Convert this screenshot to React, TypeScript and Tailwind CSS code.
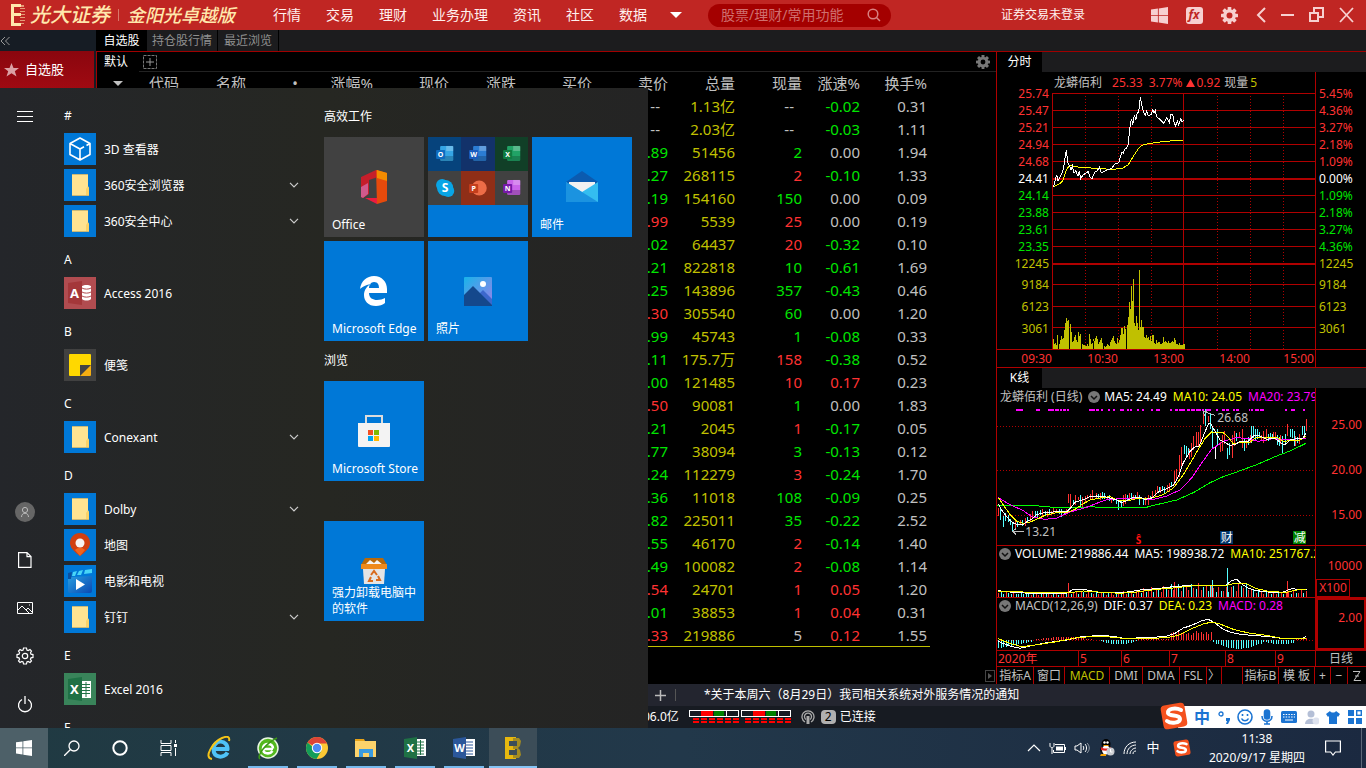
import type { ReactNode } from "react";

type Tone = "up" | "down" | "flat";

const TONES: Record<Tone, string> = {
  up: "text-[#ff3232]",
  down: "text-[#00e600]",
  flat: "text-[#c0c0c0]",
};

const NAV = ["行情", "交易", "理财", "业务办理", "资讯", "社区", "数据"];

const HEADERS = ["代码", "名称", "•", "涨幅%", "现价", "涨跌", "买价", "卖价", "总量", "现量", "涨速%", "换手%"];

// ask, ask tone, volume, last volume, last volume tone, speed, turnover
const QUOTES: [string, Tone, string, string, Tone, string, string][] = [
  ["--", "flat", "1.13亿", "--", "flat", "-0.02", "0.31"],
  ["--", "flat", "2.03亿", "--", "flat", "-0.03", "1.11"],
  [".89", "down", "51456", "2", "down", "0.00", "1.94"],
  [".27", "down", "268115", "2", "up", "-0.10", "1.33"],
  [".19", "down", "154160", "150", "down", "0.00", "0.09"],
  [".99", "up", "5539", "25", "up", "0.00", "0.19"],
  [".02", "down", "64437", "20", "up", "-0.32", "0.10"],
  [".21", "down", "822818", "10", "down", "-0.61", "1.69"],
  [".25", "down", "143896", "357", "down", "-0.43", "0.46"],
  [".30", "up", "305540", "60", "down", "0.00", "1.20"],
  [".99", "down", "45743", "1", "down", "-0.08", "0.33"],
  [".11", "down", "175.7万", "158", "up", "-0.38", "0.52"],
  [".00", "down", "121485", "10", "up", "0.17", "0.23"],
  [".50", "up", "90081", "1", "down", "0.00", "1.83"],
  [".21", "down", "2045", "1", "up", "-0.17", "0.05"],
  [".77", "down", "38094", "3", "down", "-0.13", "0.12"],
  [".24", "down", "112279", "3", "up", "-0.24", "1.70"],
  [".36", "down", "11018", "108", "down", "-0.09", "0.25"],
  [".82", "down", "225011", "35", "down", "-0.22", "2.52"],
  [".55", "down", "46170", "2", "up", "-0.14", "1.40"],
  [".49", "down", "100082", "2", "up", "-0.08", "1.14"],
  [".54", "up", "24701", "1", "up", "0.05", "1.20"],
  [".01", "down", "38853", "1", "up", "0.04", "0.31"],
  [".33", "up", "219886", "5", "flat", "0.12", "1.55"],
];

const PRICES: [string, string, string][] = [
  ["25.74", "5.45%", "text-[#ff3232]"],
  ["25.47", "4.36%", "text-[#ff3232]"],
  ["25.21", "3.27%", "text-[#ff3232]"],
  ["24.94", "2.18%", "text-[#ff3232]"],
  ["24.68", "1.09%", "text-[#ff3232]"],
  ["24.41", "0.00%", "text-white"],
  ["24.14", "1.09%", "text-[#00e600]"],
  ["23.88", "2.18%", "text-[#00e600]"],
  ["23.61", "3.27%", "text-[#00e600]"],
  ["23.35", "4.36%", "text-[#00e600]"],
  ["12245", "12245", "text-[#c0c000]"],
];
const VOLUMES = ["9184", "6123", "3061"];

const MINUTE_VOLUME = [
  10, 5, 6, 4, 14, 8, 5, 9, 13, 10, 11, 19, 26, 31, 28, 29, 17, 25, 17, 7, 8, 12, 14, 9, 7, 17, 13, 15, 7, 5, 4, 4, 3,
  3, 5, 3, 15, 10, 5, 6, 10, 8, 11, 13, 10, 5, 7, 9, 11, 6, 4, 3, 2, 3, 5, 4, 3, 7, 9, 11, 13, 8, 6, 5, 11, 6, 9, 14, 21,
  21, 15, 23, 20, 15, 24, 32, 47, 40, 63, 48, 70, 26, 23, 33, 26, 19, 79, 22, 29, 22, 22, 12, 11, 14, 11, 12, 9, 13, 8,
  14, 14, 6, 5, 9, 6, 7, 7, 5, 5, 6, 12, 7, 8, 7, 6, 8, 6, 6, 7, 8, 7, 11, 9, 5, 5, 4, 6, 4, 4, 4, 5, 5,
];

const START_ROWS: { label: string; icon?: ReactNode; folder?: boolean }[] = [
  { label: "#" },
  { label: "3D 查看器", icon: <CubeIcon /> },
  { label: "360安全浏览器", folder: true },
  { label: "360安全中心", folder: true },
  { label: "A" },
  { label: "Access 2016", icon: <AccessIcon /> },
  { label: "B" },
  { label: "便笺", icon: <StickyIcon /> },
  { label: "C" },
  { label: "Conexant", folder: true },
  { label: "D" },
  { label: "Dolby", folder: true },
  { label: "地图", icon: <MapsIcon /> },
  { label: "电影和电视", icon: <MoviesIcon /> },
  { label: "钉钉", folder: true },
  { label: "E" },
  { label: "Excel 2016", icon: <ExcelTileIcon /> },
  { label: "F" },
];

/* ---------- start menu icons ---------- */

function CubeIcon() {
  return (
    <svg width="32" height="32" viewBox="0 0 32 32" fill="none" stroke="#fff" strokeWidth="1.6" strokeLinejoin="round">
      <rect width="32" height="32" fill="#0078d7" stroke="none" />
      <path d="M16 5l10 5.500v11L16 27 6 21.500v-11zM6 10.500l10 5.500 4-2.200M22.500 12.500L26 10.500M16 16v11" />
    </svg>
  );
}

function FolderIcon() {
  return (
    <svg width="32" height="32" viewBox="0 0 32 32">
      <rect width="32" height="32" fill="#0078d7" />
      <path d="M8 5h16v13l1 1v8H8z" fill="#ffe391" />
      <path d="M8 5h16v1H8zM8 26h17v1H8z" fill="#c9b878" />
      <path d="M22 20l2-3 1 2v7h-3z" fill="#fbd267" />
    </svg>
  );
}

function AccessIcon() {
  return (
    <svg width="32" height="32" viewBox="0 0 32 32">
      <rect width="32" height="32" fill="#b14c50" />
      <path d="M4 6l14-2v24L4 26z" fill="#a4373a" />
      <text x="6" y="21" fontSize="13" fontWeight="700" fill="#fff">A</text>
      <path d="M18 9c2-1.500 7-1.500 9 0v13c-2 2-7 2-9 0z" fill="#fff" />
      <path d="M18 11c2 1.500 7 1.500 9 0M18 15c2 1.500 7 1.500 9 0M18 19c2 1.500 7 1.500 9 0" stroke="#b14c50" fill="none" />
    </svg>
  );
}

function StickyIcon() {
  return (
    <svg width="32" height="32" viewBox="0 0 32 32">
      <rect width="32" height="32" fill="#414141" />
      <path d="M6 5h20a1 1 0 011 1v10H16v11H6a1 1 0 01-1-1V6a1 1 0 011-1z" fill="#ffd800" />
      <path d="M27 16v10a1 1 0 01-1 1H16z" fill="#f5ae12" />
      <path d="M16 16h10L16 26z" fill="#434343" />
    </svg>
  );
}

function MapsIcon() {
  return (
    <svg width="32" height="32" viewBox="0 0 32 32">
      <rect width="32" height="32" fill="#0078d7" />
      <path d="M16 4c6 0 10 4.500 10 10 0 4-3 7-6 10l-4 3-4-3c-3-3-6-6-6-10C6 8.500 10 4 16 4z" fill="#d13f10" />
      <path d="M11 21c3-3 7-3 10 0l-5 6z" fill="#f0641e" />
      <circle cx="16" cy="14" r="4.500" fill="#f6f2f0" />
    </svg>
  );
}

function MoviesIcon() {
  return (
    <svg width="32" height="32" viewBox="0 0 32 32">
      <defs>
        <linearGradient id="mov" x1="0" y1="0" x2="1" y2="1">
          <stop offset="0" stopColor="#2ca5e4" />
          <stop offset="1" stopColor="#0a49b2" />
        </linearGradient>
      </defs>
      <rect width="32" height="32" fill="#0078d7" />
      <path d="M4 9l3-1v4l21-1v15a2 2 0 01-2 2H6a2 2 0 01-2-2z" fill="url(#mov)" />
      <path d="M4 8l4-1-1 7H4z" fill="#0b50a0" />
      <path d="M9 7l4-1-2 5H8zM15 6l4-1-2 5h-4zM21 5l7-1v4l-8 1z" fill="#48d5f7" />
      <path d="M12 14l9 5.500L12 25z" fill="#fff" />
    </svg>
  );
}

function ExcelTileIcon() {
  return (
    <svg width="32" height="32" viewBox="0 0 32 32">
      <rect width="32" height="32" fill="#39845a" />
      <path d="M18 8h9v17h-9z" fill="#fff" />
      <path d="M18 11.500h8M18 14.500h8M18 17.500h8M18 20.500h8M22 9v15" stroke="#217346" />
      <path d="M4 6l14-2v24L4 26z" fill="#1f7145" />
      <text x="6" y="21" fontSize="13" fontWeight="700" fill="#fff">X</text>
    </svg>
  );
}

/* ---------- tile artwork ---------- */

function OfficeArt() {
  return (
    <svg width="28" height="36" viewBox="0 0 28 36">
      <path d="M1 8L16 1l2 1v6l-9 3v14l-6 4-2-1z" fill="#c51e2a" />
      <path d="M1 18l7-4v11l-5 4-2-1z" fill="#d1598c" />
      <path d="M16 1l11 3v28l-10 3z" fill="#e64a0c" />
      <path d="M17 1l10 3v8l-10-3z" fill="#f38b00" />
      <path d="M5 29h12v6z" fill="#ec1c3f" />
    </svg>
  );
}

function MiniApp({ letter, front, back, bg }: { letter: string; front: string; back: string; bg: string }) {
  return (
    <svg width="100%" height="34" viewBox="0 0 33 34" preserveAspectRatio="xMidYMid slice">
      <rect width="34" height="34" fill={bg} />
      {letter === "S" ? (
        <g>
          <circle cx="14" cy="14" r="6" fill={back} />
          <circle cx="20" cy="20" r="6" fill={back} />
          <circle cx="17" cy="17" r="8" fill={back} />
          <text x="17" y="21" fontSize="12" fontWeight="700" fill="#fff" textAnchor="middle">S</text>
        </g>
      ) : (
        <g>
          {letter === "P" ? <circle cx="18" cy="17" r="7.500" fill={back} /> : <rect x="12" y="9" width="13" height="15" rx="1" fill={back} />}
          {letter !== "P" && <path d="M18 9h7v5h-7z" fill="#fff" opacity=".25" />}
          {letter !== "P" && <path d="M12 19h13v5H12z" fill="#000" opacity=".2" />}
          <rect x="8" y="13" width="9" height="9" rx="1" fill={front} />
          <text x="12.500" y="20" fontSize="7" fontWeight="700" fill="#fff" textAnchor="middle">{letter}</text>
        </g>
      )}
    </svg>
  );
}

function MailArt() {
  return (
    <svg width="32" height="32" viewBox="0 0 32 32">
      <path d="M0 11L16 0l16 11v6H0z" fill="#0b5bb0" />
      <path d="M3 11h26v8L16 24 3 19z" fill="#f1f1f1" />
      <path d="M0 11l16 10L32 11v20H0z" fill="#34bdf0" />
      <path d="M0 11l32 20H0z" fill="#1b93e0" />
    </svg>
  );
}

function EdgeArt() {
  return (
    <svg width="28" height="30" viewBox="0 0 28 30">
      <path
        d="M0 13C1 5 7 0 14 0c8 0 13 6 13 13v4H9c0 5 4 7 8 7 3 0 6-1 8-2v5c-2 2-6 3-9 3C8 30 4 25 4 19c0-5 3-9 7-11C5 9 1 12 0 13zm9-1h10c0-3-1-6-5-6-3 0-5 3-5 6z"
        fill="#fff"
      />
    </svg>
  );
}

function PhotosArt() {
  return (
    <svg width="30" height="30" viewBox="0 0 30 30">
      <defs>
        <linearGradient id="sky" x1="0" y1="0" x2="1" y2="1">
          <stop offset="0" stopColor="#18b4ea" />
          <stop offset="1" stopColor="#9a80e8" />
        </linearGradient>
      </defs>
      <rect x="1" y="1" width="28" height="29" rx="1" fill="url(#sky)" />
      <path d="M14 20l6-6 9 9v6H14z" fill="#3c68cc" />
      <path d="M1 19l9-9 19 19v1H1z" fill="#14488c" />
      <circle cx="20" cy="8" r="3" fill="#fff" />
    </svg>
  );
}

function StoreArt() {
  return (
    <svg width="32" height="34" viewBox="0 0 32 34">
      <path d="M8 9V2h16v7" stroke="#dcdcdc" strokeWidth="2" fill="none" />
      <path d="M0 9h32v23a1 1 0 01-1 1H1a1 1 0 01-1-1z" fill="#f3f3f3" />
      <path d="M10 16h5v5h-5z" fill="#f25022" />
      <path d="M16 16h5v5h-5z" fill="#7fba00" />
      <path d="M10 22h5v5h-5z" fill="#00a4ef" />
      <path d="M16 22h5v5h-5z" fill="#ffb900" />
    </svg>
  );
}

function BinArt() {
  return (
    <svg width="26" height="26" viewBox="0 0 26 26">
      <path d="M4 0h18l4 7H0z" fill="#b9690a" />
      <path d="M4 7l5-5 4 3 3-3 6 5z" fill="#f5f5f5" />
      <path d="M0 6h26v5H0z" fill="#ef8a1c" />
      <path d="M2 11h22l-1 15H3z" fill="#e4e4e4" />
      <path d="M10 17l3-4 3 4M17 18l2 4h-4M12 23H8l2-4" stroke="#d96a1c" strokeWidth="2" fill="none" />
    </svg>
  );
}

/* ---------- window chrome icons ---------- */

function Gear({ size, color, hole }: { size: number; color: string; hole: string }) {
  return (
    <svg width={size} height={size} viewBox="0 0 16 16">
      {[0, 45, 90, 135].map((a) => (
        <rect key={a} x="6.300" y="0" width="3.400" height="16" rx=".5" fill={color} transform={`rotate(${a} 8 8)`} />
      ))}
      <circle cx="8" cy="8" r="6" fill={color} />
      <circle cx="8" cy="8" r="2.800" fill={hole} />
    </svg>
  );
}

function WinLogo({ size, color }: { size: number; color: string }) {
  return (
    <svg width={size} height={size} viewBox="0 0 16 16" fill={color}>
      <path d="M0 2.300l6.500-.9v6.100H0zM7.300 1.300L16 0v7.500H7.300zM0 8.300h6.500v6.200L0 13.600zM7.300 8.300H16V16l-8.700-1.300z" />
    </svg>
  );
}

function TitleBar() {
  return (
    <header className="flex h-[30px] shrink-0 items-center bg-[#c02623] text-sm leading-5 text-[#fff0ee]">
      <div className="flex w-[273px] shrink-0 items-center pl-[11px] text-[#ffe8ad]">
        <svg width="15" height="22" viewBox="0 0 15 22" className="mr-1 shrink-0" fill="#ffe8ad">
          <path d="M0 0h10v3H3v6h7v3H3v7h7v3H0z" />
          <path d="M9 1h4v2H9zM9 4h5v1H9zM9 7h5v1H9zM9 10h5v1H9zM9 13h5v1H9zM9 16h5v1H9zM9 19h4v1H9z" opacity=".6" />
        </svg>
        <span className="whitespace-nowrap text-xl font-medium italic leading-6">光大证券</span>
        <span className="mx-2 h-3 w-px bg-[#d9776a]" />
        <span className="whitespace-nowrap text-lg font-medium italic leading-6">金阳光卓越版</span>
      </div>
      <nav className="flex items-center gap-[25px]">
        {NAV.map((n) => (
          <a key={n} href="#" className="whitespace-nowrap">{n}</a>
        ))}
      </nav>
      <button aria-label="更多" className="ml-[23px]">
        <svg width="12" height="6" viewBox="0 0 12 6"><path d="M0 0h12L6 6z" fill="#fff" /></svg>
      </button>
      <label className="ml-[26px] flex h-[23px] w-[183px] items-center rounded-full bg-[#a40000] pl-[13px]">
        <input
          aria-label="搜索"
          placeholder="股票/理财/常用功能"
          className="w-[146px] bg-transparent text-sm leading-5 outline-none placeholder:text-[#cf6f6f]"
        />
        <svg width="14" height="14" viewBox="0 0 14 14" fill="none" stroke="#d98080" strokeWidth="1.500">
          <circle cx="6" cy="6" r="4.800" />
          <path d="M9.500 9.500L13 13" />
        </svg>
      </label>
      <a href="#" className="ml-auto text-xs">证券交易未登录</a>
      <div className="ml-[66px] mr-3 flex items-center gap-[15px]">
        <div className="flex items-center gap-[18px]">
          <button aria-label="布局"><WinLogo size={17} color="#f7d0d0" /></button>
          <button aria-label="公式">
            <svg width="17" height="17" viewBox="0 0 17 17">
              <rect width="17" height="17" rx="3" fill="#f7d0d0" />
              <text x="8" y="12" fontSize="12" fontStyle="italic" fontWeight="700" textAnchor="middle" fill="#c02623">fx</text>
            </svg>
          </button>
          <button aria-label="设置"><Gear size={17} color="#f7d0d0" hole="#c02623" /></button>
          <button aria-label="返回">
            <svg width="10" height="16" viewBox="0 0 10 16" fill="none" stroke="#f7d0d0" strokeWidth="2"><path d="M9 1L2 8l7 7" /></svg>
          </button>
        </div>
        <button aria-label="最小化">
          <svg width="13" height="16" viewBox="0 0 13 16"><path d="M0 7h13v2H0z" fill="#f7d0d0" /></svg>
        </button>
        <button aria-label="还原">
          <svg width="15" height="16" viewBox="0 0 15 16" fill="none" stroke="#f7d0d0" strokeWidth="2"><path d="M5 5V1h9v9h-4M1 6h8v8H1z" /></svg>
        </button>
        <button aria-label="关闭">
          <svg width="15" height="16" viewBox="0 0 15 16" stroke="#f7d0d0" strokeWidth="1.800"><path d="M1 1l13 14M14 1L1 15" /></svg>
        </button>
      </div>
    </header>
  );
}

function QuoteTable() {
  return (
    <section className="flex min-w-0 flex-1 flex-col border-l border-[#a00000]">
      <div className="flex h-5 shrink-0 items-center border-b border-[#222] text-xs">
        <button className="h-5 w-[42px] bg-black pr-1 leading-5 text-white">默认</button>
        <button aria-label="添加" className="ml-1">
          <svg width="14" height="14" viewBox="0 0 14 14" fill="none" stroke="#777">
            <rect x=".5" y=".5" width="13" height="13" strokeDasharray="3 1" />
            <path d="M7 3v8M3 7h8" stroke="#999" />
          </svg>
        </button>
        <button aria-label="表格设置" className="ml-auto mr-1.5"><Gear size={14} color="#777" hole="#000" /></button>
      </div>
      <div className="w-[833px] border-b border-[#c0c000]">
        <table className="w-[830px] table-fixed text-right text-[15px] leading-[22px] text-[#c0c0c0]">
          <colgroup>
            {["w-[52px]", "w-[67px]", "w-[82px]", "w-[75px]", "w-[76px]", "w-[67px]", "w-[76px]", "w-[76px]", "w-[67px]", "w-[67px]", "w-[58px]", "w-[67px]"].map(
              (w, i) => <col key={i} className={w} />,
            )}
          </colgroup>
          <thead>
            <tr className="h-[22px]">
              {HEADERS.map((h, i) => (
                <th key={h} className="whitespace-nowrap p-0 font-normal">
                  {i === 0 ? (
                    <span className="flex items-center justify-between">
                      <svg width="10" height="5" viewBox="0 0 10 5" className="ml-4 shrink-0"><path d="M0 0h10L5 5z" fill="#c0c0c0" /></svg>
                      <span className="w-0">{h}</span>
                    </span>
                  ) : i === 1 ? (
                    <span className="flex justify-end"><span className="w-0">{h}</span></span>
                  ) : (
                    h
                  )}
                </th>
              ))}
            </tr>
          </thead>
          <tbody>
            {QUOTES.map(([ask, askTone, vol, last, lastTone, speed, turn], i) => (
              <tr key={i} className="h-[23px]">
                <td colSpan={7} className="p-0" />
                <td className={`p-0 ${TONES[askTone]} ${ask === "--" ? "pr-2" : ""}`}>{ask}</td>
                <td className="p-0 text-[#c0c000]">{vol}</td>
                <td className={`p-0 ${TONES[lastTone]} ${last === "--" ? "pr-2" : ""}`}>{last}</td>
                <td className={`p-0 ${TONES[speed.startsWith("-") ? "down" : speed === "0.00" ? "flat" : "up"]}`}>{speed}</td>
                <td className="p-0">{turn}</td>
              </tr>
            ))}
          </tbody>
        </table>
      </div>
      <button aria-label="展开" className="mb-0.5 ml-auto mr-px mt-auto">
        <svg width="10" height="12" viewBox="0 0 10 12"><rect x=".5" y=".5" width="9" height="11" fill="none" stroke="#444" /><path d="M3 3l4 3-4 3z" fill="#555" /></svg>
      </button>
    </section>
  );
}

/* ---------- right-hand charts ---------- */

function IntradayPlot() {
  return (
    <svg width="264" height="256" viewBox="186 39 792 768" className="block" shapeRendering="crispEdges" fill="none" strokeWidth="3">
      <g stroke="#b00000">
        {[40.5, 91.5, 142.5, 193.5, 244.5, 346.5, 397.5, 448.5, 499.5, 613.5, 679.5, 742.5].map((y) => <path key={y} d={`M186 ${y}h792`} />)}
        <path d="M186 297h792M186 552h792" strokeWidth="6" />
        <path d="M187.500 39v768M580.500 39v768" />
        {[286.5, 385.5, 484.5, 682.5, 781.5, 880.5].map((x) => <path key={x} d={`M${x} 48v759`} strokeDasharray="3 6" />)}
      </g>
      <path d={MINUTE_VOLUME.map((v, i) => `M${190.5 + i * 3} 807v-${v * 3}`).join("")} stroke="#c0c000" />
      <path d="M205.500 807v-40M238.500 807v-60M274.500 807v-30M310.500 807v-24M340.500 807v-24M409.500 807v-60" stroke="#000" />
      <polyline
        points="190,320 208,312 218,302 224,284 232,264 240,257 270,262 320,265 360,268 395,266 415,254 428,232 448,202 460,194 500,187 540,183 581,180"
        stroke="#ffff00"
      />
      <polyline
        points="190,322 196,300 200,284 204,302 210,292 216,280 220,268 224,240 229,211 233,246 238,256 243,270 247,258 252,280 257,272 264,288 268,272 272,296 280,284 290,278 295,274 300,292 306,296 314,276 322,272 328,262 334,278 350,270 365,266 374,252 386,248 393,226 396,216 400,220 403,208 408,206 414,194 418,160 422,124 425,118 428,134 433,104 437,120 442,98 446,96 451,52 457,84 462,98 466,106 470,94 474,106 484,104 488,86 492,100 496,92 500,110 512,120 522,130 530,114 538,128 542,104 548,102 552,126 556,138 562,124 566,134 572,116 576,126 581,120"
        stroke="#fff"
      />
    </svg>
  );
}

const MAGENTA_MARKS =
  "M78 131h8M88 131h10M139 131h10M174 131h18M194 131h14M211 131h5M219 131h8M232 131h5M298 131h18M319 131h9M332 131h7M354 131h5M368 131h7M391 131h12M410 131h7M420 131h5M441 131h5M456 131h5M484 131h6M498 131h12M540 131h6M554 131h10M566 131h12M580 131h6M590 131h10M603 131h12M617 131h16M636 131h6M644 131h18M679 131h5M695 131h10M708 131h10M730 131h5M738 131h10M776 131h5M784 131h5M796 131h10M810 131h12M886 131h6M904 131h10M938 131h7";

function CandlePlot() {
  return (
    <svg width="318" height="139" viewBox="21 120 954 417" className="block" shapeRendering="crispEdges" fill="none" strokeWidth="3">
      <path d="M21 181.500h954M21 313.500h954M21 448.500h954" stroke="#b00000" strokeDasharray="3 6" />
      <path d={MAGENTA_MARKS} stroke="#ff00ff" strokeWidth="5" />
      <path
        stroke="#ff3232"
        d="M26 425v24M76 465v24M91 462v16M106 455v26M121 444v22M127 436v20M157 430v22M172 436v16M184 434v14M190 424v18M199 428v14M229 428v14M236 383v28M241 383v40M256 388v30M265 393v10M277 394v28M286 390v18M292 386v14M301 384v16M307 372v26M319 380v16M331 382v20M352 390v10M364 392v20M400 386v34M406 384v30M418 380v22M430 388v14M442 378v18M466 394v24M475 388v30M487 376v20M496 372v18M502 360v22M511 362v20M532 358v20M538 350v28M553 314v42M560 308v38M568 268v66M575 244v60M598 248v32M604 230v44M610 210v42M619 198v42M625 198v42M631 176v58M640 136v38M655 150v18M691 228v30M698 208v48M704 194v40M728 206v70M734 194v46M747 198v16M756 190v56M769 222v24M781 206v26M813 206v20M820 194v36M829 190v36M850 198v18M856 198v24M871 206v28M892 174v36M916 210v30M928 204v30M950 158v36"
      />
      <path
        stroke="#55ffff"
        d="M31 430v32M40 450v32M46 440v24M55 446v22M61 460v16M68 470v26M82 466v18M98 462v18M112 452v14M136 436v16M142 434v18M151 432v16M166 434v14M178 430v16M208 430v14M214 430v22M223 436v12M250 402v16M271 388v34M325 384v16M337 378v22M343 382v18M358 388v16M370 398v8M379 400v14M385 406v26M394 404v22M412 388v14M424 382v18M436 388v12M448 388v30M460 400v18M481 390v12M508 364v14M517 360v14M523 364v16M544 348v16M583 238v26M589 240v32M595 246v22M646 130v50M661 144v46M668 180v68M683 190v48M712 246v34M719 230v38M740 200v24M763 220v34M774 214v22M785 180v50M791 180v36M797 190v34M803 190v30M808 198v14M835 204v22M841 202v18M847 204v12M862 206v30M868 214v26M877 210v52M886 204v30M901 188v26M907 190v26M913 194v46M922 212v18M937 180v26M943 180v32"
      />
      <path d="M677 240v38" stroke="#fff" />
      <polyline points="22,418 135,418 160,422 200,424 250,426 300,422 340,425 465,425 500,416 560,402 610,380 660,350 700,332 740,318 800,296 860,270 900,255 948,232" stroke="#00ff00" />
      <polyline points="25,395 60,416 100,434 125,452 165,460 200,456 240,438 290,424 330,408 355,400 400,398 440,398 490,400 530,390 570,372 605,336 640,284 665,250 700,226 740,215 775,218 805,226 850,218 890,222 948,216" stroke="#ff00ff" />
      <polyline points="25,395 45,424 62,448 80,466 100,472 120,468 140,460 165,448 200,440 235,438 255,430 275,416 300,402 330,396 360,392 385,404 410,405 440,398 470,398 500,392 520,386 550,366 580,326 605,284 625,250 645,218 665,198 700,200 715,214 730,234 760,228 780,228 800,214 860,214 880,226 930,222 948,210" stroke="#ffff00" />
      <polyline points="25,414 35,432 47,448 60,463 72,472 85,476 100,476 112,466 125,460 140,446 160,441 190,438 205,435 230,437 240,428 256,408 275,403 300,392 320,390 340,391 360,396 380,402 395,410 410,404 430,394 450,394 465,400 485,396 505,378 525,370 550,358 565,332 580,290 600,256 612,244 628,240 640,210 655,174 662,172 675,196 690,222 705,230 720,238 735,236 750,226 775,226 790,210 805,208 830,220 855,217 875,232 885,236 900,222 920,218 940,216 948,200" stroke="#fff" />
      <path d="M640 136l34 12M640 136l4 14M640 136h12M68 496h34M68 496l10-8M68 496l10 10" stroke="#c0c0c0" />
      <text x="682" y="167" fontSize="36" fill="#c0c0c0" stroke="none">26.68</text>
      <text x="106" y="510" fontSize="36" fill="#c0c0c0" stroke="none">13.21</text>
      <text x="437" y="533" fontSize="30" fontWeight="700" fill="#ff1010" stroke="none">Ŝ</text>
      <rect x="690" y="495" width="39" height="39" fill="#003468" />
      <text x="692" y="528" fontSize="36" fill="#fff" stroke="none">财</text>
      <rect x="909" y="495" width="39" height="39" fill="#008000" />
      <text x="911" y="528" fontSize="36" fill="#fff" stroke="none">减</text>
    </svg>
  );
}

const DAY_COUNT = 124;
// rough turnover envelope, interpolated by index: [bar, height]
const VOLUME_ENVELOPE = [[0, 16], [20, 12], [30, 18], [44, 12], [56, 22], [70, 36], [80, 38], [90, 26], [98, 44], [102, 22], [110, 14], [124, 22]];

function volumeAt(i: number) {
  const k = Math.max(1, VOLUME_ENVELOPE.findIndex(([x]) => x >= i));
  const [x0, y0] = VOLUME_ENVELOPE[k - 1];
  const [x1, y1] = VOLUME_ENVELOPE[k];
  const base = y0 + ((y1 - y0) * (i - x0)) / (x1 - x0);
  return Math.round(base * (0.8 + 0.3 * Math.sin(i * 2.3)));
}

function VolumePlot() {
  const bars = Array.from({ length: DAY_COUNT }, (_, i) => ({
    d: `M${25 + Math.round(i * 7.5)} 171v-${volumeAt(i)}`,
    red: (i * 7) % 5 < 3 && !(i < 12 && i % 3),
  }));
  return (
    <svg width="318" height="35" viewBox="21 66 954 105" className="block" shapeRendering="crispEdges" fill="none" strokeWidth="3">
      <path d={bars.filter((b) => b.red).map((b) => b.d).join("") + "M236 171v-42M553 171v-46M892 171v-48"} stroke="#ff3232" />
      <path d={bars.filter((b) => !b.red).map((b) => b.d).join("") + "M668 171v-52M712 171v-87M661 171v-34"} stroke="#55ffff" />
      <polyline points="24,152 60,156 150,162 230,160 250,148 290,150 330,158 400,158 450,150 500,146 550,140 600,136 680,138 705,137 725,122 740,118 755,132 775,145 800,152 850,158 880,156 905,146 950,150" stroke="#fff" />
      <polyline points="24,153 100,156 240,158 280,153 340,157 390,160 440,156 500,148 560,143 620,136 700,138 735,130 770,131 800,146 840,155 890,157 920,150 948,148" stroke="#ffff00" />
    </svg>
  );
}

// histogram lengths in bar order; positive goes up
function macdAt(i: number) {
  if (i < 14) return -Math.round(24 - i * 1.5);
  if (i < 40) return Math.round(10 * Math.sin(((i - 12) / 28) * Math.PI));
  if (i < 56) return -Math.round(12 * Math.sin(((i - 40) / 16) * Math.PI));
  if (i < 69) return 4;
  if (i < 86) return 17 + ((i * 5) % 11);
  if (i < 106) return -Math.round(25 * Math.sin(((i - 84) / 24) * Math.PI));
  if (i < 119) return -Math.round(12 * Math.sin(((i - 104) / 18) * Math.PI));
  return 8;
}

function MacdPlot() {
  const bars = Array.from({ length: DAY_COUNT }, (_, i) => ({ x: 25 + Math.round(i * 7.5), v: macdAt(i) }));
  return (
    <svg width="318" height="36" viewBox="21 222 954 108" className="block" shapeRendering="crispEdges" fill="none" strokeWidth="3">
      <path d="M21 301.500h954" stroke="#b00000" strokeDasharray="3 6" />
      <path d={bars.filter((b) => b.v > 0).map((b) => `M${b.x} 301v-${b.v}`).join("")} stroke="#ff3232" />
      <path d={bars.filter((b) => b.v < 0).map((b) => `M${b.x} 301v${-b.v}`).join("")} stroke="#55ffff" />
      <polyline points="24,304 60,318 90,325 120,318 170,308 230,300 270,291 330,286 370,289 400,295 480,293 530,288 555,280 580,264 605,256 635,242 655,238 670,246 700,268 725,278 760,284 840,290 880,296 935,297 948,290" stroke="#fff" />
      <polyline points="24,296 60,310 95,320 130,316 200,305 260,293 330,288 390,294 460,296 530,293 565,286 600,268 640,252 665,246 690,252 730,268 780,280 830,286 870,294 935,296 948,294" stroke="#ffff00" />
    </svg>
  );
}

function Collapse() {
  return (
    <button aria-label="折叠" className="shrink-0">
      <svg width="12" height="12" viewBox="0 0 12 12" className="block"><circle cx="6" cy="6" r="6" fill="#777" /><path d="M3 5l3 3 3-3" fill="none" stroke="#111" strokeWidth="1.500" /></svg>
    </button>
  );
}

const INDICATORS: [string, string][] = [
  ["指标A", "w-[37px]"],
  ["窗口", "w-[31px]"],
  ["MACD", "w-[45px] text-[#c0c000]"],
  ["DMI", "w-[33px]"],
  ["DMA", "w-[37px]"],
  ["FSL", "w-[27px]"],
  ["〉", "w-[15px]"],
  ["", "w-[21px]"],
  ["指标B", "w-[36px]"],
  ["模 板", "w-[36px]"],
  ["+", "w-[16px]"],
  ["−", "w-[17px]"],
];

const MONTHS: [string, string][] = [
  ["2020年", "w-[82px]"],
  ["5", "w-[43px]"],
  ["6", "w-[48px]"],
  ["7", "w-[56px]"],
  ["8", "w-[50px]"],
  ["9", "w-[40px]"],
];

function ChartTab({ label }: { label: string }) {
  return (
    <div className="h-5 shrink-0 bg-[#1c1c1e]">
      <button className="h-5 w-[45px] bg-black leading-5 text-white">{label}</button>
    </div>
  );
}

function ChartPanel() {
  return (
    <aside className="flex w-[370px] shrink-0 flex-col overflow-hidden border-l border-[#b00000] text-xs leading-4 text-[#c0c0c0]">
      <ChartTab label="分时" />
      <div className="flex">
        <div className="flex w-[55px] flex-col pr-[3px] pt-[13px] text-right leading-[17px]">
          {PRICES.map(([p, , c], i) => <span key={i} className={c}>{p}</span>)}
          <div className="flex flex-col pt-0.5 leading-[22px] text-[#c0c000]">{VOLUMES.map((v) => <span key={v}>{v}</span>)}</div>
        </div>
        <div className="w-[264px] border-r border-[#b00000]">
          <div className="flex h-[21px] items-center whitespace-nowrap pl-0.5 text-[#ff3232]">
            <span className="text-[#c0c0c0]">龙蟒佰利</span>
            <span className="ml-2.5">25.33</span>
            <span className="ml-1.5">3.77%</span>
            <svg width="9" height="8" viewBox="0 0 9 8" className="ml-1"><path d="M0 8h9L4.500 0z" fill="#ff3232" /></svg>
            <span className="ml-px">0.92</span>
            <span className="ml-1 text-[#c0c0c0]">现量</span>
            <span className="ml-0.5 text-[#c0c000]">5</span>
          </div>
          <IntradayPlot />
        </div>
        <div className="flex flex-1 flex-col pl-[3px] pt-[13px] leading-[17px]">
          {PRICES.map(([, p, c], i) => <span key={i} className={c}>{p}</span>)}
          <div className="flex flex-col pt-0.5 leading-[22px] text-[#c0c000]">{VOLUMES.map((v) => <span key={v}>{v}</span>)}</div>
        </div>
      </div>
      <div className="h-[19px] border-y border-[#b00000]">
        <div className="flex h-[17px] w-[319px] border-r border-[#b00000] text-right leading-[17px] text-[#ff3232]">
          <span className="w-[55px]">09:30</span>
          <span className="w-[66px]">10:30</span>
          <span className="w-[66px]">13:00</span>
          <span className="w-[66px]">14:00</span>
          <span className="w-[64px]">15:00</span>
        </div>
      </div>
      <ChartTab label="K线" />
      <div className="flex border-b border-[#b00000]">
        <div className="w-[319px] overflow-hidden border-r border-[#b00000]">
          <div className="flex h-[18px] items-center gap-1 overflow-hidden whitespace-nowrap pl-[3px]">
            <span className="mr-0.5">龙蟒佰利 (日线)</span>
            <Collapse />
            <div className="flex gap-1.5">
              <span className="text-white">MA5: 24.49</span>
              <span className="text-[#ffff00]">MA10: 24.05</span>
              <span className="text-[#ff00ff]">MA20: 23.79</span>
            </div>
          </div>
          <CandlePlot />
        </div>
        <div className="flex flex-1 flex-col gap-[29px] pr-1 pt-[29px] text-right text-[#ff3232]">
          {["25.00", "20.00", "15.00"].map((v) => <span key={v}>{v}</span>)}
        </div>
      </div>
      <div className="flex border-b border-[#b00000]">
        <div className="w-[319px] overflow-hidden border-r border-[#b00000]">
          <div className="flex h-4 items-center gap-1 whitespace-nowrap pl-0.5 text-white">
            <Collapse />
            <div className="flex gap-1.5">
              <span>VOLUME: 219886.44</span>
              <span>MA5: 198938.72</span>
              <span className="text-[#ffff00]">MA10: 251767.20</span>
            </div>
          </div>
          <VolumePlot />
        </div>
        <div className="flex flex-1 flex-col justify-between text-[#ff3232]">
          <span className="pr-1 pt-3 text-right">10000</span>
          <span className="w-[34px] border border-[#b00000] text-center">X100</span>
        </div>
      </div>
      <div className="flex border-b border-[#b00000]">
        <div className="w-[319px] overflow-hidden border-r border-[#b00000]">
          <div className="flex h-4 items-center gap-1 whitespace-nowrap pl-0.5">
            <Collapse />
            <div className="flex gap-1.5">
              <span>MACD(12,26,9)</span>
              <span className="text-white">DIF: 0.37</span>
              <span className="text-[#ffff00]">DEA: 0.23</span>
              <span className="text-[#ff00ff]">MACD: 0.28</span>
            </div>
          </div>
          <MacdPlot />
        </div>
        <div className="flex-1 border-2 border-[#b00000] pr-0.5 pt-2.5 text-right text-[#ff3232]">2.00</div>
      </div>
      <div className="flex h-4 shrink-0 border-b border-[#b00000] leading-[15px] text-[#ff3232]">
        {MONTHS.map(([m, w]) => <span key={m} className={`border-r border-[#b00000] pl-px ${w}`}>{m}</span>)}
        <span className="flex-1 text-center text-[#c0c0c0]">日线</span>
      </div>
      <div className="flex flex-1">
        {INDICATORS.map(([t, w], i) =>
          t === "" ? (
            <span key={i} className={`border-r border-[#b00000] ${w}`} />
          ) : (
            <button key={i} className={`flex items-center justify-center whitespace-nowrap border-r border-[#b00000] ${w}`}>{t}</button>
          ),
        )}
        <button aria-label="缩放" className="flex flex-1 items-center justify-center">
          <svg width="8" height="10" viewBox="0 0 8 10" fill="none" stroke="#c0c0c0"><path d="M0 .5h7L1 9.500h7M2 5h4" /></svg>
        </button>
      </div>
    </aside>
  );
}

/* ---------- bottom bars ---------- */

function Meter() {
  return (
    <svg width="50" height="14" viewBox="0 0 50 14" shapeRendering="crispEdges">
      <rect x=".5" y=".5" width="49" height="6" fill="none" stroke="#fff" />
      <path d="M12 1h12v5H12z" fill="#f00" />
      <path d="M25 1h10v5H25z" fill="#008000" />
      <path d="M37 0h1v7h-1z" fill="#fff" />
      <path d="M4 9h46M4 12h46" stroke="#f00" strokeWidth="2" strokeDasharray="6 2" />
    </svg>
  );
}

function StatusBars() {
  return (
    <div className="shrink-0 text-xs text-white">
      <div className="flex h-[22px] items-center bg-[#23252f] pl-[654px]">
        <svg width="13" height="13" viewBox="0 0 13 13"><path d="M6.500 1v11M1 6.500h11" stroke="#bbb" strokeWidth="1.500" /></svg>
        <span className="ml-2 h-3 w-px bg-[#555]" />
        <a href="#" className="ml-7">*关于本周六（8月29日）我司相关系统对外服务情况的通知</a>
      </div>
      <div className="flex h-[22px] items-center bg-[#171b22] pl-[643px]">
        <span className="mr-2.5">06.0亿</span>
        <Meter />
        <span className="w-0.5" />
        <Meter />
        <svg width="14" height="14" viewBox="0 0 14 14" className="ml-2.5 mr-1.5" fill="none" stroke="#aaa">
          <path d="M4 12a6 6 0 116 0M5 9.500a3.500 3.500 0 114 0" strokeWidth="1.300" />
          <path d="M7 6v8" strokeWidth="3" />
        </svg>
        <span className="mr-1 rounded bg-[#b0b0b0] px-1 leading-[14px] text-black">2</span>
        <span>已连接</span>
      </div>
    </div>
  );
}

function SogouLogo({ size }: { size: number }) {
  return (
    <svg width={size} height={size} viewBox="0 0 28 28">
      <rect x="2" y="2" width="24" height="24" rx="4" fill="#f4511e" transform="rotate(-10 14 14)" />
      <path d="M21 8c-6-3-14-1-13 3 1 4 12 1 12 6 0 4-9 5-13 2" fill="none" stroke="#fff" strokeWidth="4" strokeLinecap="round" />
    </svg>
  );
}

function ImeBar() {
  return (
    <div className="absolute bottom-10 right-0 flex h-[22px] w-[188px] items-center justify-between bg-white pl-4 pr-1">
      <span className="absolute -left-[18px] -top-1"><SogouLogo size={28} /></span>
      <span className="text-base font-bold leading-5 text-[#1b74d2]">中</span>
      <svg width="12" height="14" viewBox="0 0 12 14"><circle cx="3" cy="4" r="2" fill="none" stroke="#1b74d2" strokeWidth="1.300" /><path d="M8 8h4v2l-2 4H8l1-3H8z" fill="#1b74d2" /></svg>
      <svg width="16" height="16" viewBox="0 0 16 16" fill="none" stroke="#1b74d2" strokeWidth="1.600"><circle cx="8" cy="8" r="7" /><path d="M4.500 9.500c1.500 3 5.500 3 7 0M5.500 5v2M10.500 5v2" /></svg>
      <svg width="12" height="16" viewBox="0 0 12 16" fill="none" stroke="#1b74d2" strokeWidth="1.600"><rect x="3.500" y="1" width="5" height="9" rx="2.500" fill="#1b74d2" /><path d="M1 7c0 7 10 7 10 0M6 12v3M3 15h6" /></svg>
      <svg width="16" height="12" viewBox="0 0 16 12"><rect width="16" height="12" rx="1.500" fill="#1b74d2" /><path d="M2 3.500h12M2 6h12" stroke="#fff" strokeDasharray="1.500 1.200" /><path d="M4 9h8" stroke="#fff" /></svg>
      <svg width="14" height="15" viewBox="0 0 14 15" fill="#b4bfd6"><circle cx="6" cy="4" r="3.500" /><path d="M0 14c0-7 12-7 12 0z" /><circle cx="11" cy="11" r="3.500" fill="#dde2ee" /></svg>
      <svg width="14" height="14" viewBox="0 0 14 14" fill="#1b74d2"><path d="M4 1c1 2 5 2 6 0l4 3-2 3-1-1v8H3V6L2 7 0 4z" /></svg>
      <svg width="14" height="14" viewBox="0 0 14 14" fill="#1b74d2"><path d="M0 0h6v6H0zM0 8h6v6H0zM8 8h6v6H8z" /><rect x="8.700" y=".7" width="4.600" height="4.600" fill="none" stroke="#1b74d2" strokeWidth="1.400" /></svg>
    </div>
  );
}

function OfficeDoc({ letter, color }: { letter: string; color: string }) {
  return (
    <svg width="24" height="24" viewBox="0 0 24 24">
      <path d="M12 3h11v17H12z" fill="#fff" />
      <path d="M13 6h8M13 9h8M13 12h8M13 15h8M13 18h8" stroke={color} />
      {letter === "X" && <path d="M17.500 4v15" stroke={color} />}
      <path d="M1 3l13-2v22L1 21z" fill={color} />
      <text x="7.500" y="16" fontSize="11" fontWeight="700" fill="#fff" textAnchor="middle">{letter}</text>
    </svg>
  );
}

const TASKS: { name: string; art: ReactNode; open?: boolean }[] = [
  {
    name: "Internet Explorer",
    art: (
      <svg width="24" height="24" viewBox="0 0 24 24" fill="none">
        <path d="M22 13H8M20.500 14c1-11-14-11-14-1 0 9.500 11 9.500 14 3.500" stroke="#4fc3f7" strokeWidth="4" />
        <path d="M5 23C-4 22 6 6 15 2c6-2.500 8-1 7 3" stroke="#f5c518" strokeWidth="2" />
      </svg>
    ),
  },
  {
    name: "360安全浏览器",
    open: true,
    art: (
      <svg width="24" height="24" viewBox="0 0 24 24" fill="none">
        <circle cx="12" cy="12" r="10" fill="#53b81e" stroke="#e9f6e2" strokeWidth="1.500" />
        <path d="M17 13H7M17 12.500c0-6-10-6-10 0s7 6 9.500 2.500" stroke="#fff" strokeWidth="2.600" />
        <path d="M4 23c-4-3 6-16 17-21" stroke="#3c9a16" strokeWidth="1.500" />
      </svg>
    ),
  },
  {
    name: "Chrome",
    open: true,
    art: (
      <svg width="24" height="24" viewBox="0 0 24 24">
        <circle cx="12" cy="12" r="11" fill="#fcc934" />
        <path d="M12 12L2.500 6.500a11 11 0 0119 0L22 7.500H12z" fill="#dc4437" />
        <path d="M2.500 6.500a11 11 0 009 16.500l5-8.500H12z" fill="#139d59" />
        <circle cx="12" cy="12" r="5.200" fill="#fff" />
        <circle cx="12" cy="12" r="4.200" fill="#4c8bf5" />
      </svg>
    ),
  },
  {
    name: "文件资源管理器",
    open: true,
    art: (
      <svg width="24" height="24" viewBox="0 0 24 24">
        <path d="M1 3h9l1 2H1z" fill="#e8a317" />
        <path d="M1 5h21v16H1z" fill="#fdd36b" />
        <path d="M5 21v-8h14v8h-4v-4H9v4z" fill="#3a9be0" />
      </svg>
    ),
  },
  { name: "Excel", open: true, art: <OfficeDoc letter="X" color="#1f7145" /> },
  { name: "Word", open: true, art: <OfficeDoc letter="W" color="#2b579a" /> },
];

function Taskbar() {
  return (
    <footer className="flex h-10 shrink-0 items-stretch bg-linear-to-r from-[#203a42] via-[#22384a] to-[#1b2940] text-xs text-white">
      <button aria-label="开始" className="flex w-12 items-center justify-center bg-[#4d6068]"><WinLogo size={16} color="#fff" /></button>
      <button aria-label="搜索" className="flex w-12 items-center justify-center">
        <svg width="16" height="16" viewBox="0 0 16 16" fill="none" stroke="#fff" strokeWidth="1.300"><circle cx="10" cy="6" r="5" /><path d="M6.500 9.500L0 16" /></svg>
      </button>
      <button aria-label="Cortana" className="flex w-12 items-center justify-center">
        <svg width="16" height="16" viewBox="0 0 16 16"><circle cx="8" cy="8" r="6.700" fill="none" stroke="#fff" strokeWidth="2" /></svg>
      </button>
      <button aria-label="任务视图" className="mr-[3px] flex w-12 items-center justify-center">
        <svg width="17" height="16" viewBox="0 0 17 16" fill="none" stroke="#fff"><path d="M1 0v3.500h10V0M1 16v-3.500h10V16M1 5.500h10v5H1zM15.500 0v3M15.500 8v8" /><path d="M14 4h3v3h-3z" fill="#fff" stroke="none" /></svg>
      </button>
      <div className="flex gap-px">
        {TASKS.map((t) => (
          <button key={t.name} aria-label={t.name} className="flex w-12 flex-col items-center justify-end">
            <span className="mb-1.5">{t.art}</span>
            <span className={`h-0.5 w-10 ${t.open ? "bg-[#76b9ed]" : ""}`} />
          </button>
        ))}
        <button aria-label="光大证券" className="flex w-12 flex-col items-center justify-end bg-[#3c4d58]">
          <svg width="18" height="24" viewBox="0 0 18 24" className="mb-1.5">
            <path d="M1 1h11v4H5v5h6v4H5v5h7v4H1z" fill="#e8b80e" />
            <path d="M9 2h6l2 3-1 5-2 2 2 2 1 5-2 3H9v-3h4v-6H9v-3h4V5H9z" fill="#a48c22" />
          </svg>
          <span className="h-0.5 w-full bg-[#85c4f5]" />
        </button>
      </div>
      <div className="ml-auto flex items-center">
        <div className="flex items-center gap-2">
          <svg width="14" height="8" viewBox="0 0 14 8" fill="none" stroke="#fff" strokeWidth="1.200"><path d="M1 7l6-6 6 6" /></svg>
          <svg width="17" height="12" viewBox="0 0 17 12" fill="none" stroke="#fff"><path d="M6 2.500h9.500v8H4.500V8M16.500 5v3M1 1v3c0 2 4 2 4 0V1M3 6v6" /><path d="M7 4.500h7v4H7z" fill="#fff" stroke="none" /></svg>
          <svg width="16" height="12" viewBox="0 0 16 12" fill="none" stroke="#fff"><path d="M1 4h2l4-3v10L3 8H1zM9 4c1 1 1 3 0 4M11 2c2 2 2 6 0 8" /><path d="M13 1c3 3 3 7 0 10" opacity=".5" /></svg>
          <svg width="17" height="17" viewBox="0 0 17 17">
            <ellipse cx="8" cy="5" rx="4.500" ry="5" fill="#000" /><ellipse cx="8" cy="11" rx="6" ry="5" fill="#111" />
            <ellipse cx="8" cy="11" rx="4" ry="4.500" fill="#fff" /><circle cx="6.500" cy="3.500" r="1.200" fill="#fff" /><circle cx="9.500" cy="3.500" r="1.200" fill="#fff" />
            <path d="M5 6h6l-1 1H6z" fill="#f5a000" /><path d="M3 8c3 2 7 2 10 0v3c-3 1-7 1-10 0z" fill="#e02020" /><path d="M3 15h5v2H2z" fill="#f5a000" />
            <circle cx="12.500" cy="12.500" r="4" fill="#c9ccd0" /><path d="M12.500 10v3h2" stroke="#fff" fill="none" />
          </svg>
          <svg width="14" height="14" viewBox="0 0 14 14" fill="none" stroke="#fff"><path d="M1 13C1 6 6 1 13 1M4 13c0-5 4-9 9-9M7 13c0-3 3-6 6-6M10 13c0-2 1-3 3-3" /></svg>
          <span className="w-4 text-center text-[13px]">中</span>
        </div>
        <span className="ml-3"><SogouLogo size={18} /></span>
        <div className="ml-[18px] text-center leading-[19px]">
          <p>11:38</p>
          <p>2020/9/17 星期四</p>
        </div>
        <button aria-label="通知" className="ml-5 mr-5">
          <svg width="16" height="16" viewBox="0 0 16 16" fill="none" stroke="#fff" strokeWidth="1.200"><path d="M.6 1h14.800v11h-5L8 15l-2.400-3h-5z" /></svg>
        </button>
        <span className="mr-1 h-10 w-px bg-[#5b6878]" />
      </div>
    </footer>
  );
}

/* ---------- start menu ---------- */

function Tile({ label, art, className = "bg-[#0078d7]" }: { label: string; art: ReactNode; className?: string }) {
  return (
    <button className={`relative flex h-[100px] w-[100px] items-center justify-center text-left text-xs leading-4 text-white ${className}`}>
      {art}
      <span className="absolute bottom-1 left-2 right-1">{label}</span>
    </button>
  );
}

function RailButton({ label, children }: { label: string; children: ReactNode }) {
  return <button aria-label={label} className="flex h-12 w-full items-center justify-center pl-0.5">{children}</button>;
}

function StartMenu() {
  return (
    <div className="absolute bottom-10 left-0 top-[88px] flex w-[648px] overflow-hidden bg-linear-to-r from-[#24262a] via-[#262722] to-[#242424] text-xs text-white">
      <div className="flex w-12 shrink-0 flex-col pt-1">
        <RailButton label="菜单">
          <svg width="16" height="11" viewBox="0 0 16 11"><path d="M0 .5h16M0 5.500h16M0 10.500h16" stroke="#fff" /></svg>
        </RailButton>
        <div className="mt-auto">
          <RailButton label="用户">
            <svg width="20" height="20" viewBox="0 0 20 20" fill="none" stroke="#bbb"><circle cx="10" cy="10" r="10" fill="#666" stroke="none" /><circle cx="10" cy="8" r="2.600" /><path d="M6.500 15c0-5 7-5 7 0" /></svg>
          </RailButton>
          <RailButton label="文档">
            <svg width="14" height="16" viewBox="0 0 14 16" fill="none" stroke="#fff" strokeWidth="1.200"><path d="M.6.6h8.400l4 4v10.800H.6zM9 .6v4h4" /></svg>
          </RailButton>
          <RailButton label="图片">
            <svg width="16" height="12" viewBox="0 0 16 12" fill="none" stroke="#fff"><path d="M.5.5h15v11H.5zM1 8l4-4 7 7M9 8l2-2 4 4M12 3h1" /></svg>
          </RailButton>
          <RailButton label="设置">
            <svg width="18" height="18" viewBox="0 0 18 18" fill="none" stroke="#fff" strokeWidth="1.200">
              <circle cx="9" cy="9" r="2.700" />
              <path d="M7.500 1h3l.4 2 1.300.6L14 2.500 15.500 4l-1 1.800.5 1.400 2 .4v2.800l-2 .4-.6 1.400 1.100 1.800-1.500 1.500-1.800-1-1.300.5-.4 2h-3l-.4-2-1.300-.5-1.800 1L2.500 14l1.100-1.800L3 10.800l-2-.4V7.600l2-.4.6-1.400L2.500 4 4 2.500l1.800 1.100L7.100 3z" />
            </svg>
          </RailButton>
          <RailButton label="电源">
            <svg width="16" height="17" viewBox="0 0 16 17" fill="none" stroke="#fff" strokeWidth="1.300"><path d="M5 3.500a6.500 6.500 0 106 0M8 0v8" /></svg>
          </RailButton>
        </div>
      </div>
      <ul className="w-[256px] shrink-0 pl-4 pt-[7px]">
        {START_ROWS.map((r) => (
          <li key={r.label} className="h-9">
            {r.icon || r.folder ? (
              <button className="flex h-9 w-full items-center text-left">
                {r.folder ? <FolderIcon /> : r.icon}
                <span className="ml-2 flex-1 pt-0.5">{r.label}</span>
                {r.folder && <svg width="10" height="6" viewBox="0 0 10 6" className="mr-[5px]"><path d="M1 .8l4 4 4-4" fill="none" stroke="#ccc" strokeWidth="1.200" /></svg>}
              </button>
            ) : (
              <span className="block pt-1 leading-[34px]">{r.label}</span>
            )}
          </li>
        ))}
      </ul>
      <div className="pl-5 pt-[9px]">
        <h2 className="h-10 leading-10">高效工作</h2>
        <div className="grid grid-cols-[100px_100px_100px] gap-1">
          <Tile label="Office" art={<OfficeArt />} className="bg-[#414141]" />
          <button aria-label="Office 应用" className="grid h-[100px] w-[100px] grid-cols-3 content-start overflow-hidden bg-[#0078d7]">
            <MiniApp letter="O" front="#0f6cc0" back="#35a5e4" bg="#06437c" />
            <MiniApp letter="W" front="#1b5cbe" back="#2b7cd3" bg="#12326a" />
            <MiniApp letter="X" front="#107c41" back="#21a366" bg="#113f27" />
            <MiniApp letter="S" front="#00aff0" back="#08a5e6" bg="#414141" />
            <MiniApp letter="P" front="#c43e1c" back="#ed6c47" bg="#8f2e17" />
            <MiniApp letter="N" front="#7719aa" back="#ca64ea" bg="#414141" />
          </button>
          <Tile label="邮件" art={<MailArt />} />
          <Tile label="Microsoft Edge" art={<EdgeArt />} />
          <Tile label="照片" art={<PhotosArt />} />
        </div>
        <h2 className="h-10 leading-10">浏览</h2>
        <Tile label="Microsoft Store" art={<StoreArt />} />
        <div className="h-10" />
        <Tile label="强力卸载电脑中的软件" art={<BinArt />} />
      </div>
    </div>
  );
}

export default function App() {
  return (
    <div className="relative flex h-screen flex-col overflow-hidden bg-black font-['Noto_Sans','Noto_Sans_CJK_SC',sans-serif]">
      <TitleBar />
      <div className="flex h-[21px] shrink-0 bg-[#1c1c1e] text-xs leading-5 text-[#8f8f8f]">
        <button aria-label="收起" className="w-24 bg-[#161c24] text-left">
          <svg width="10" height="10" viewBox="0 0 10 10" fill="none" stroke="#999"><path d="M5 1L1 5l4 4M9.500 1l-4 4 4 4" /></svg>
        </button>
        <button className="w-[51px] bg-black text-white">自选股</button>
        <button className="w-[71px] border-r border-black">持仓股行情</button>
        <button className="w-[61px] border-r border-black">最近浏览</button>
      </div>
      <div className="flex min-h-0 flex-1">
        <div className="w-24 shrink-0 bg-[#161c24] pr-0.5">
          <button className="flex h-[38px] w-full items-center gap-1.5 bg-linear-to-b from-[#8a060e] to-[#a00a12] pl-1 text-[13px] text-white">
            <svg width="15" height="14" viewBox="0 0 15 14"><path d="M7.500 0l2 5H15l-4.200 3.200 1.700 5.300-5-3.200-5 3.200 1.700-5.300L0 5h5.500z" fill="#dba0a4" /></svg>
            自选股
          </button>
        </div>
        <div className="flex min-w-0 flex-1 border-t border-[#a00000]">
          <QuoteTable />
          <ChartPanel />
        </div>
      </div>
      <StatusBars />
      <Taskbar />
      <StartMenu />
      <ImeBar />
    </div>
  );
}
